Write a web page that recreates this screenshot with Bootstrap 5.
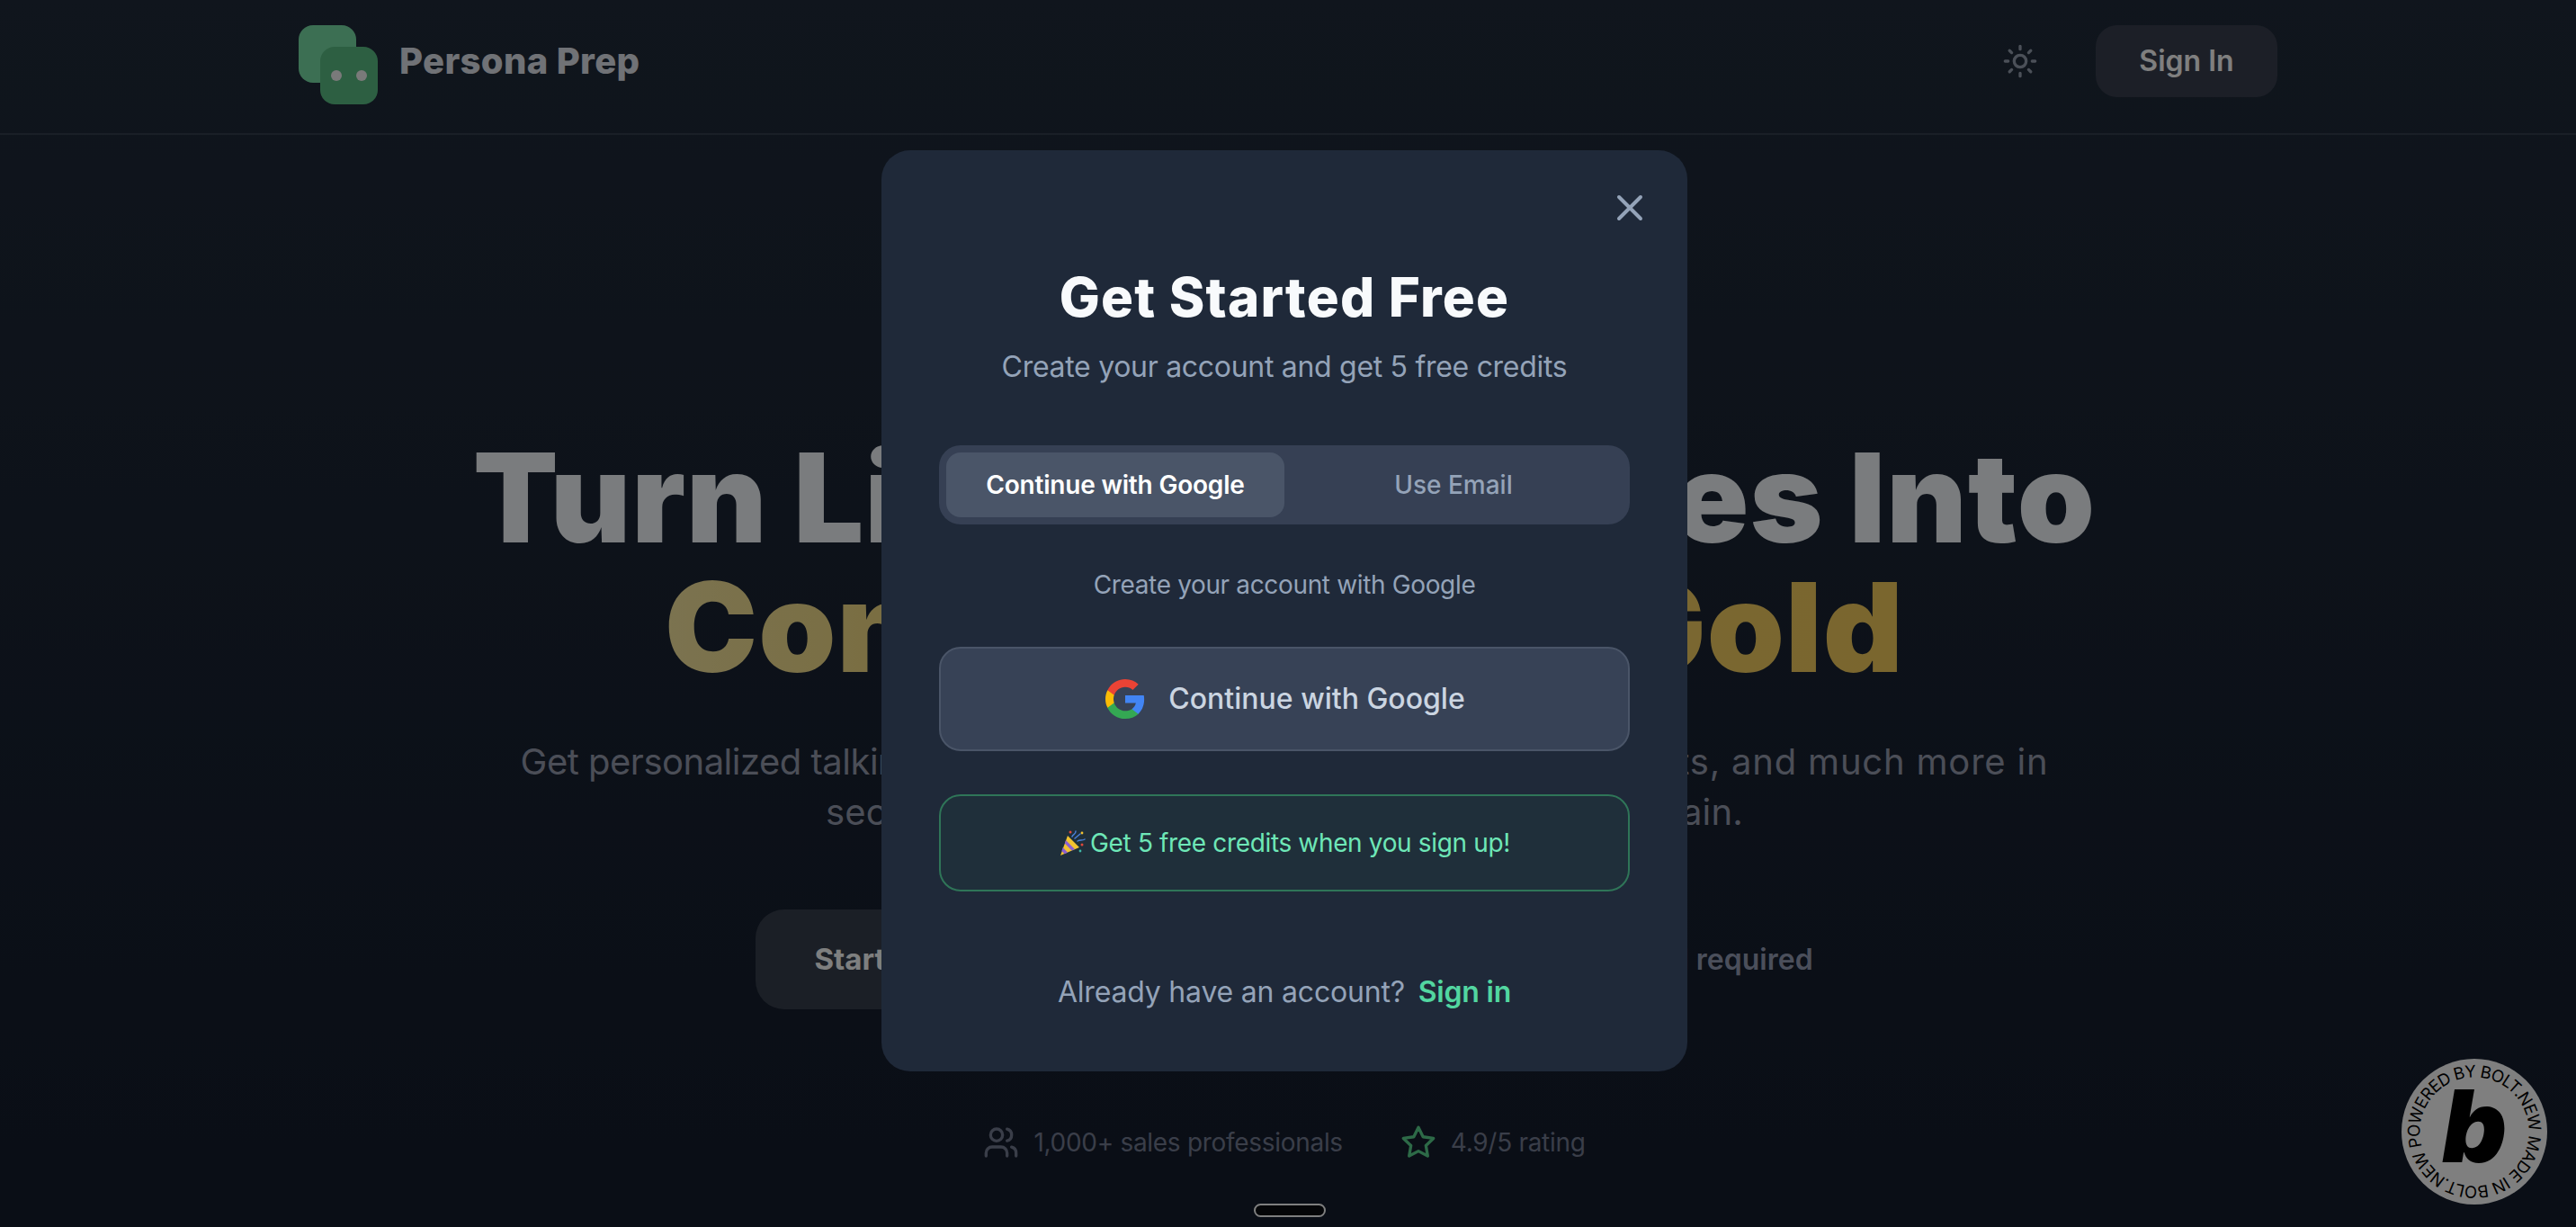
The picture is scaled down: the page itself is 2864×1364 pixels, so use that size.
<!doctype html>
<html lang="en">
<head>
<meta charset="utf-8">
<title>Persona Prep</title>
<link href="https://cdn.jsdelivr.net/npm/bootstrap@5.3.0/dist/css/bootstrap.min.css" rel="stylesheet">
<style>
html,body{height:100%;overflow:hidden}
body{font-family:Inter,"Liberation Sans",sans-serif;background:linear-gradient(180deg,#202b3a 0%,#141c2c 100%);color:#f4f8fc;position:relative}
.pp-header{height:150px;border-bottom:2px solid #343e4e}
.pp-shell{width:2200px;height:136px}
.pp-logo{width:88px;height:88px;position:relative;margin-top:8px}
.pp-sq{position:absolute;width:64px;height:64px;border-radius:16px}
.pp-sq-a{left:0;top:0;background:#78dea6}
.pp-sq-b{left:24px;top:24px;background:#5abe84}
.pp-eye{position:absolute;top:26px;width:12px;height:12px;border-radius:50%;background:#f4f4f4}
.pp-eye-a{left:12px}.pp-eye-b{left:40px}
.pp-brand{font-size:40px;font-weight:800;color:#e0e4ec;margin-left:24px;letter-spacing:.35px;line-height:48px}
.pp-signin.btn{width:202px;height:80px;border-radius:24px;border:0;background:#383f4e;color:#fff;font-size:32px;font-weight:600;padding:0}
.pp-sun{width:40px;height:40px;margin-right:64px;color:#96a0b0}
.pp-hero{padding-right:8px;text-align:center}
.pp-gold{background:linear-gradient(90deg,#f6e6a0 0%,#f4d878 25%,#f4cc5c 100%);-webkit-background-clip:text;background-clip:text;color:transparent}
.pp-herotext{padding-top:331px}
.pp-h1flow{font-size:138px;line-height:144px;font-weight:900;letter-spacing:1px;margin:0 0 50px;white-space:nowrap}
.pp-tight{letter-spacing:-1.3px}
.pp-wide{letter-spacing:8.300px}
.pp-lead{font-size:40px;line-height:56px;color:#969cae;margin:0 0 80px;white-space:nowrap;letter-spacing:.2px}
.pp-lead-l{letter-spacing:-.5px}
.pp-lead-r{letter-spacing:.8px}
.pp-cta{gap:64px}
.pp-start.btn{width:755px;height:111px;border-radius:32px;border:0;background:#363e4c;color:#fcffff;font-size:33px;font-weight:700;padding:0 0 0 65px;text-align:left}
.pp-req{font-size:32px;font-weight:600;color:#969eb6}
.pp-stats{margin-top:127px;gap:64px;font-size:28px;color:#747c92;letter-spacing:-.3px}
.pp-stat-ic{width:40px;height:40px;margin-right:16px}
.pp-star{color:#5ad48e}
.pp-pill{position:absolute;left:1394px;bottom:11px;width:80px;height:15px;border-radius:8px;border:2px solid #fff;background:#0a0c10}
.pp-bolt{position:absolute;right:31px;bottom:24px;width:164px;height:164px}
.pp-overlay{position:fixed;inset:0;background:rgba(0,0,0,.5);padding:0 8px 6px 0;z-index:1050}
.pp-modal.modal-content{width:896px;background:#1f2939;border:0;border-radius:32px;padding:127px 64px 64px;color:#f8fafc}
.pp-close{position:absolute;top:40px;right:40px;width:48px;height:48px;padding:0;border:0;background:transparent;color:#94a3b8}
.pp-title{font-size:60px;line-height:72px;font-weight:800;margin:0;letter-spacing:1.2px}
.pp-sub{font-size:32px;line-height:48px;color:#94a3b8;margin:18px 0 0;letter-spacing:-.3px}
.pp-tabs{margin-top:63px;padding:8px;background:#364054;border-radius:24px}
.pp-tabs .nav-link{width:376px;height:72px;border-radius:16px;padding:0;font-size:28px;font-weight:500;color:#94a3b8;line-height:72px;background:transparent}
.pp-tabs .nav-link.active{background:#4a5568;color:#fff;font-weight:600;letter-spacing:-.2px}
.pp-note{font-size:28px;line-height:40px;color:#94a3b8;margin:47px 0 0;letter-spacing:-.35px}
.pp-google.btn{height:116px;margin-top:49px;border:2px solid #4a5568;background:#374256;color:#cbd5e1;border-radius:24px;font-size:32px;font-weight:500;gap:24px;padding:0}
.pp-promo{height:108px;margin-top:48px;border:2px solid #2f7558;background:#1f2f3a;border-radius:24px;color:#6ee7b7;font-size:28px;gap:5px;letter-spacing:-.35px}
.pp-foot{margin:88px 0 0;font-size:32px;line-height:48px;color:#94a3b8;letter-spacing:-.2px}
.pp-foot a{color:#52d6a0;font-weight:600;text-decoration:none;margin-left:6px}
</style>
</head>
<body>
<header class="pp-header d-flex justify-content-center align-items-start">
  <div class="pp-shell d-flex align-items-center justify-content-between">
    <a class="d-flex align-items-center text-decoration-none" href="#">
      <span class="pp-logo d-block">
        <span class="pp-sq pp-sq-a"></span>
        <span class="pp-sq pp-sq-b"><span class="pp-eye pp-eye-a"></span><span class="pp-eye pp-eye-b"></span></span>
      </span>
      <span class="pp-brand">Persona Prep</span>
    </a>
    <div class="d-flex align-items-center">
      <svg class="pp-sun" viewBox="0 0 24 24" fill="none" stroke="currentColor" stroke-width="2" stroke-linecap="round" stroke-linejoin="round"><circle cx="12" cy="12" r="4"/><path d="M12 2v2M12 20v2M4.93 4.93l1.41 1.41M17.66 17.66l1.41 1.41M2 12h2M20 12h2M6.34 17.66l-1.41 1.41M19.07 4.93l-1.41 1.41"/></svg>
      <button class="btn pp-signin" type="button">Sign In</button>
    </div>
  </div>
</header>

<main class="pp-hero">
  <div class="pp-herotext">
    <h1 class="pp-h1flow">Turn Li<span class="pp-tight">nkedIn Profil</span>es Into<br><span class="pp-gold">Co<span class="pp-wide">nversation</span> Gold</span></h1>
    <p class="pp-lead"><span class="pp-lead-l">Get personalized talking</span> points, objection handling scripts, pain poin<span class="pp-lead-r">ts, and much more in</span><br>seconds, not hours. Less research, way more to gain.</p>
    <div class="pp-cta d-flex justify-content-center align-items-center">
      <button class="btn pp-start" type="button">Start Your Free Trial</button>
      <span class="pp-req">No credit card required</span>
    </div>
    <div class="pp-stats d-flex justify-content-center align-items-center">
      <span class="d-flex align-items-center">
        <svg class="pp-stat-ic" viewBox="0 0 24 24" fill="none" stroke="currentColor" stroke-width="2" stroke-linecap="round" stroke-linejoin="round"><path d="M16 21v-2a4 4 0 0 0-4-4H6a4 4 0 0 0-4 4v2"/><circle cx="9" cy="7" r="4"/><path d="M22 21v-2a4 4 0 0 0-3-3.87"/><path d="M16 3.13a4 4 0 0 1 0 7.75"/></svg>
        1,000+ sales professionals
      </span>
      <span class="d-flex align-items-center">
        <svg class="pp-stat-ic pp-star" viewBox="0 0 24 24" fill="none" stroke="currentColor" stroke-width="2" stroke-linecap="round" stroke-linejoin="round"><polygon points="12 2 15.09 8.26 22 9.27 17 14.14 18.18 21.02 12 17.77 5.82 21.02 7 14.14 2 9.27 8.91 8.26 12 2"/></svg>
        4.9/5 rating
      </span>
    </div>
  </div>
</main>

<div class="pp-pill"></div>

<svg class="pp-bolt" viewBox="0 0 164 164" role="img" aria-label="Powered by Bolt.new">
  <circle cx="82" cy="82" r="81" fill="#fff"/>
  <defs><path id="ppring" d="M21.500 82a60.500 60.500 0 1 1 121 0a60.500 60.500 0 1 1 -121 0"/></defs>
  <g transform="rotate(-16 82 82)">
    <text font-family="Inter, 'Liberation Sans', sans-serif" font-size="18.500" font-weight="400" fill="#000"><textPath href="#ppring" textLength="376" lengthAdjust="spacing">POWERED BY BOLT.NEW MADE IN BOLT.NEW</textPath></text>
  </g>
  <text x="82" y="116" text-anchor="middle" font-family="Inter, 'Liberation Sans', sans-serif" font-size="112" font-weight="900" font-style="italic" fill="#000">b</text>
</svg>

<div class="pp-overlay d-flex align-items-center justify-content-center">
  <div class="modal-content pp-modal text-center" role="dialog" aria-modal="true">
    <button class="pp-close" type="button" aria-label="Close">
      <svg width="48" height="48" viewBox="0 0 24 24" fill="none" stroke="currentColor" stroke-width="2" stroke-linecap="round" stroke-linejoin="round"><path d="M18 6 6 18M6 6l12 12"/></svg>
    </button>
    <h2 class="pp-title">Get Started Free</h2>
    <p class="pp-sub">Create your account and get 5 free credits</p>
    <ul class="nav nav-pills pp-tabs">
      <li class="nav-item"><a class="nav-link active" href="#">Continue with Google</a></li>
      <li class="nav-item"><a class="nav-link" href="#">Use Email</a></li>
    </ul>
    <p class="pp-note">Create your account with Google</p>
    <button class="btn pp-google w-100 d-flex align-items-center justify-content-center" type="button">
      <svg width="48" height="48" viewBox="0 0 24 24"><path fill="#4285F4" d="M22.56 12.25c0-.78-.07-1.53-.2-2.25H12v4.26h5.92c-.26 1.37-1.04 2.53-2.21 3.31v2.77h3.57c2.08-1.92 3.28-4.74 3.28-8.09z"/><path fill="#34A853" d="M12 23c2.97 0 5.46-.98 7.28-2.66l-3.57-2.77c-.98.66-2.23 1.06-3.71 1.06-2.86 0-5.29-1.93-6.16-4.53H2.18v2.84C3.99 20.53 7.7 23 12 23z"/><path fill="#FBBC05" d="M5.84 14.09c-.22-.66-.35-1.36-.35-2.09s.13-1.43.35-2.09V7.07H2.18C1.43 8.55 1 10.22 1 12s.43 3.45 1.18 4.93l2.85-2.22.81-.62z"/><path fill="#EA4335" d="M12 5.38c1.62 0 3.06.56 4.21 1.64l3.15-3.15C17.45 2.09 14.97 1 12 1 7.7 1 3.99 3.47 2.18 7.07l3.66 2.84c.87-2.6 3.3-4.53 6.16-4.53z"/></svg>
      Continue with Google
    </button>
    <div class="pp-promo d-flex align-items-center justify-content-center">
      <svg width="30" height="30" viewBox="0 0 30 30" aria-hidden="true"><path fill="#f2c230" d="M10 7 23 20 2 29z"/><path fill="#8a5fd0" d="M8 12 18 22 14.500 23.500 6.800 15.500zM4.700 20 10 25.800 6.500 27.300 3.400 24z"/><path d="M15 8c1-3 4-2 4-6M21 13c3-2 5 0 8-2M18 10l6-5" fill="none" stroke="#4a7fd8" stroke-width="1.500" stroke-linecap="round"/><circle cx="13" cy="3" r="1.500" fill="#e0483c"/><circle cx="26" cy="17" r="1.500" fill="#e0483c"/><circle cx="26" cy="4" r="1.400" fill="#f2c230"/><circle cx="24" cy="24" r="1.400" fill="#3fb8a8"/></svg>
      <span>Get 5 free credits when you sign up!</span>
    </div>
    <p class="pp-foot">Already have an account? <a href="#">Sign in</a></p>
  </div>
</div>
<script src="https://cdn.jsdelivr.net/npm/bootstrap@5.3.0/dist/js/bootstrap.bundle.min.js"></script>
</body>
</html>
